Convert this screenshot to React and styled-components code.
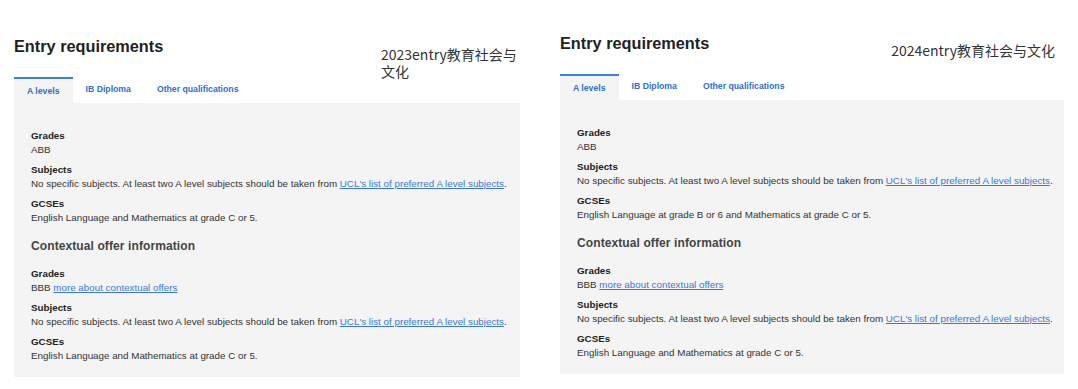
import React from "react";
import styled, { createGlobalStyle } from "styled-components";

const GlobalStyle = createGlobalStyle`
  html, body {
    margin: 0;
    padding: 0;
    background: #ffffff;
  }
  body {
    font-family: "Liberation Sans", Arial, sans-serif;
    color: #333333;
  }
`;

const Page = styled.div`
  display: flex;
  gap: 40px;
  padding-left: 14px;
  width: 1078px;
  height: 389px;
  box-sizing: border-box;
  overflow: hidden;
`;

const Column = styled.section`
  width: ${p => p.width}px;
  padding-top: ${p => p.top}px;
  flex-shrink: 0;
`;

const Header = styled.div`
  display: flex;
  align-items: flex-start;
  height: 40px;
`;

const Title = styled.h2`
  margin: 0;
  font-size: 16.3px;
  line-height: 18px;
  font-weight: bold;
  color: #222222;
`;

const Note = styled.div`
  margin-left: auto;
  margin-top: ${p => p.top}px;
  margin-right: ${p => p.right}px;
  width: ${p => (p.width ? `${p.width}px` : "auto")};
  font-family: "Noto Sans CJK SC", "Noto Sans", sans-serif;
  font-size: 14px;
  line-height: 17px;
  color: #333333;
`;

const Tabs = styled.div`
  display: flex;
  height: 26px;
`;

const Tab = styled.div`
  display: flex;
  align-items: center;
  padding: 0 13px ${p => (p.active ? 0 : 4)}px;
  box-sizing: border-box;
  font-size: 8.7px;
  font-weight: bold;
  color: #2f6fcc;
  background: ${p => (p.active ? "#f4f4f4" : "transparent")};
  border-top: 2px solid ${p => (p.active ? "#3a80dc" : "transparent")};
`;

const Panel = styled.div`
  background: #f4f4f4;
  padding: 26px 4px 8px 17px;
`;

const Group = styled.dl`
  margin: 0;
`;

const Label = styled.dt`
  font-size: 9.8px;
  line-height: 14px;
  font-weight: bold;
  color: #222222;
`;

const Value = styled.dd`
  margin: 0 0 6px;
  font-size: 9.8px;
  line-height: 14px;
  color: #333333;
  white-space: nowrap;
`;

const Link = styled.a`
  color: #3b78d6;
  text-decoration: underline;
`;

const SubHeading = styled.h3`
  margin: 13px 0 13px;
  font-size: 12px;
  line-height: 16px;
  font-weight: bold;
  color: #444444;
  letter-spacing: 0.1px;
`;

const subjectsText = (
  <>
    No specific subjects. At least two A level subjects should be taken from{" "}
    <Link href="#">UCL's list of preferred A level subjects</Link>.
  </>
);

const Requirements = ({ gcse }) => (
  <Panel>
    <Group>
      <Label>Grades</Label>
      <Value>ABB</Value>
      <Label>Subjects</Label>
      <Value>{subjectsText}</Value>
      <Label>GCSEs</Label>
      <Value>{gcse}</Value>
    </Group>
    <SubHeading>Contextual offer information</SubHeading>
    <Group>
      <Label>Grades</Label>
      <Value>
        BBB <Link href="#">more about contextual offers</Link>
      </Value>
      <Label>Subjects</Label>
      <Value>{subjectsText}</Value>
      <Label>GCSEs</Label>
      <Value>English Language and Mathematics at grade C or 5.</Value>
    </Group>
  </Panel>
);

const EntryBlock = ({ width, top, note, noteWidth, noteTop, noteRight, gcse }) => (
  <Column width={width} top={top}>
    <Header>
      <Title>Entry requirements</Title>
      <Note width={noteWidth} top={noteTop} right={noteRight}>
        {note}
      </Note>
    </Header>
    <Tabs>
      <Tab active>A levels</Tab>
      <Tab>IB Diploma</Tab>
      <Tab>Other qualifications</Tab>
    </Tabs>
    <Requirements gcse={gcse} />
  </Column>
);

export default function App() {
  return (
    <>
      <GlobalStyle />
      <Page>
        <EntryBlock
          width={506}
          top={37}
          note="2023entry教育社会与文化"
          noteWidth={139}
          noteTop={9}
          noteRight={0}
          gcse="English Language and Mathematics at grade C or 5."
        />
        <EntryBlock
          width={504}
          top={34}
          note="2024entry教育社会与文化"
          noteTop={8}
          noteRight={9}
          gcse="English Language at grade B or 6 and Mathematics at grade C or 5."
        />
      </Page>
    </>
  );
}
